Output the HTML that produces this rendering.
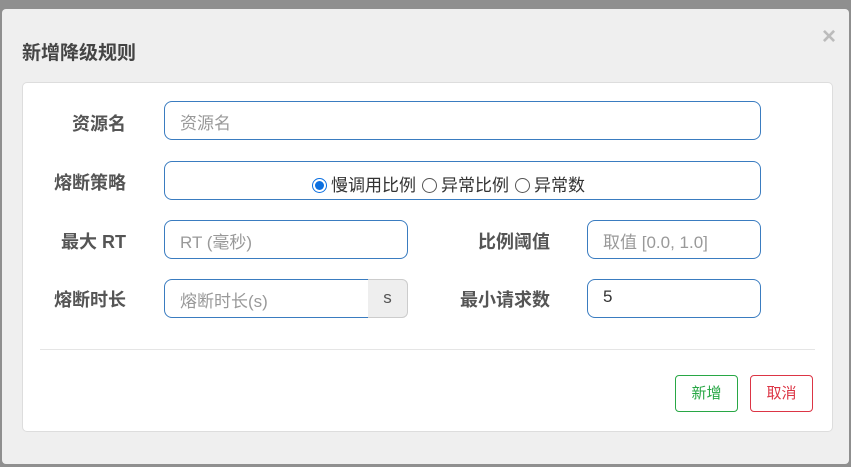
<!DOCTYPE html>
<html><head><meta charset="utf-8"><style>
*{box-sizing:border-box;margin:0;padding:0}
body{width:851px;height:467px;background:#8f8f8f;position:relative;overflow:hidden;font-family:"Liberation Sans","Noto Sans CJK SC",sans-serif}
.modal{position:absolute;left:2px;top:9px;width:847px;height:455px;background:#efefef;border-radius:4px}
.title{position:absolute;left:20px;top:29px;font-size:19px;font-weight:bold;color:#444}
.close{position:absolute;left:820px;top:14px;font-size:24px;color:#bbb;font-weight:bold}
.card{position:absolute;left:22px;top:82px;width:811px;height:350px;background:#fff;border:1px solid #ddd;border-radius:5px}
.lbl{position:absolute;font-size:18px;font-weight:bold;color:#555;text-align:right;width:110px;line-height:22px}
.in{position:absolute;border:1px solid #3a7cc0;border-radius:8px;height:39px;font-size:17px;color:#999;padding:7px 15px;background:#fff}
.radio{display:inline-block;width:15px;height:15px;border:1px solid #555;border-radius:50%;vertical-align:-2px;margin-right:4px;margin-left:6px;position:relative}
.radio.on{border-color:#0b6fe0;margin-left:0}
.radio.on:after{content:"";position:absolute;left:2px;top:2px;width:9px;height:9px;border-radius:50%;background:#0b6fe0}
.btn{position:absolute;top:375px;width:63px;height:37px;border-radius:4px;font-size:15px;text-align:center;line-height:35px;background:#fff}
</style></head><body>
<div class="modal">
<div class="title">新增降级规则</div>
<div class="close">×</div>
</div>
<div class="card"></div>
<div class="lbl" style="left:16px;top:113px">资源名</div>
<div class="in" style="left:164px;top:101px;width:597px">资源名</div>
<div class="lbl" style="left:16px;top:172px">熔断策略</div>
<div class="in" style="left:164px;top:161px;width:597px;height:39px;color:#333;padding:9px 0 0 147px;white-space:nowrap"><span class="radio on"></span>慢调用比例<span class="radio"></span>异常比例<span class="radio"></span>异常数</div>
<div class="lbl" style="left:16px;top:231px">最大 RT</div>
<div class="in" style="left:164px;top:220px;width:244px">RT (毫秒)</div>
<div class="lbl" style="left:440px;top:231px">比例阈值</div>
<div class="in" style="left:587px;top:220px;width:174px">取值 [0.0, 1.0]</div>
<div class="lbl" style="left:16px;top:289px">熔断时长</div>
<div class="in" style="left:164px;top:279px;width:205px;border-radius:8px 0 0 8px">熔断时长(s)</div>
<div style="position:absolute;left:368px;top:279px;width:40px;height:39px;background:#eee;border:1px solid #ccc;border-left:none;border-radius:0 6px 6px 0;font-size:17px;color:#555;text-align:center;line-height:36px">s</div>
<div class="lbl" style="left:440px;top:289px">最小请求数</div>
<div class="in" style="left:587px;top:279px;width:174px;color:#333">5</div>
<div style="position:absolute;left:40px;top:349px;width:775px;height:1px;background:#e5e5e5"></div>
<div class="btn" style="left:675px;border:1px solid #28a745;color:#28a745">新增</div>
<div class="btn" style="left:750px;border:1px solid #dc3545;color:#dc3545">取消</div>
</body></html>
